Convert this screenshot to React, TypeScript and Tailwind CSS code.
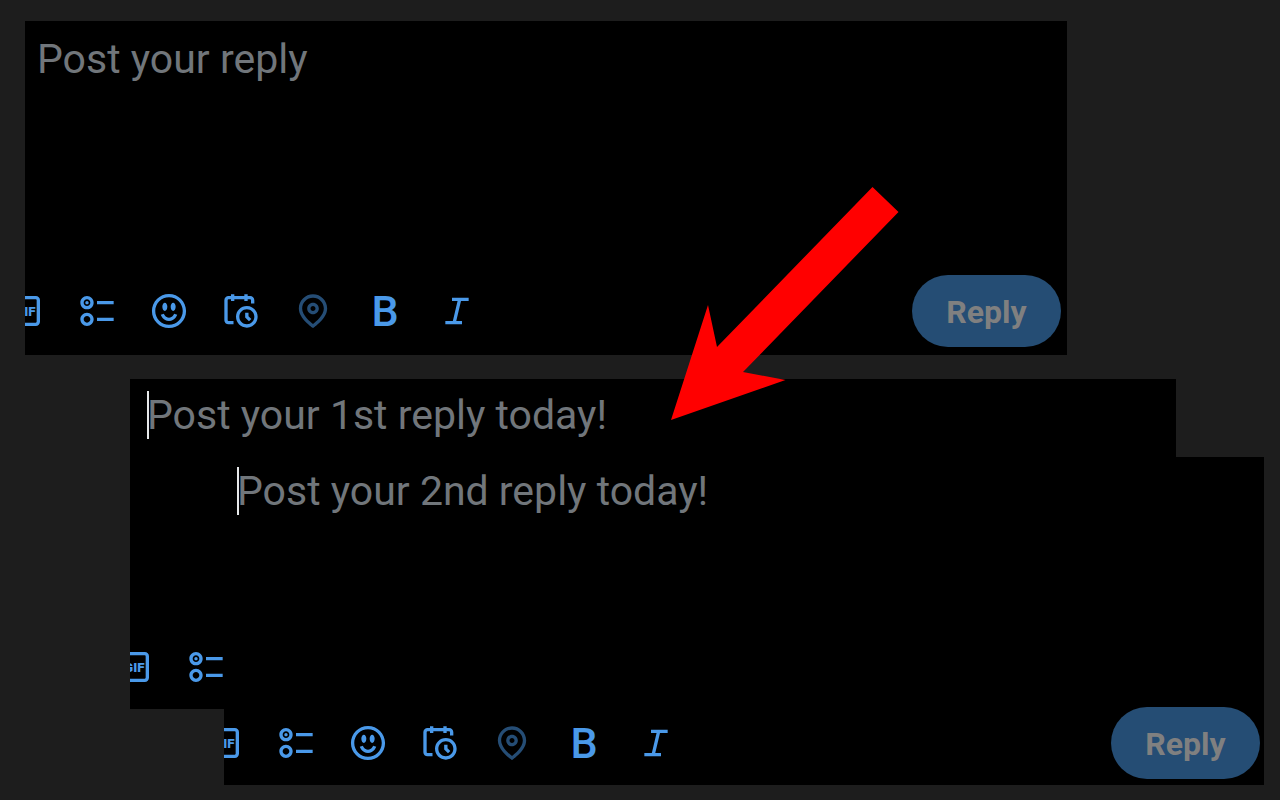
import React from "react";
import clsx from "clsx";

const paths = {
  poll: "M6 5c-1.1 0-2 .895-2 2s.9 2 2 2 2-.895 2-2-.9-2-2-2zM2 7c0-2.209 1.79-4 4-4s4 1.791 4 4-1.79 4-4 4-4-1.791-4-4zm20 1H12V6h10v2zM6 15c-1.1 0-2 .895-2 2s.9 2 2 2 2-.895 2-2-.9-2-2-2zm-4 2c0-2.209 1.79-4 4-4s4 1.791 4 4-1.79 4-4 4-4-1.791-4-4zm20 1H12v-2h10v2zM7 7c0 .552-.45 1-1 1s-1-.448-1-1 .45-1 1-1 1 .448 1 1z",
  emoji:
    "M8 9.5C8 8.119 8.672 7 9.5 7S11 8.119 11 9.5 10.328 12 9.5 12 8 10.881 8 9.5zm6.5 2.5c.828 0 1.5-1.119 1.5-2.5S15.328 7 14.5 7 13 8.119 13 9.5s.672 2.5 1.5 2.5zM12 16c-2.224 0-3.021-2.227-3.051-2.316l-1.897.633c.05.15 1.271 3.684 4.949 3.684s4.898-3.533 4.949-3.684l-1.896-.638c-.033.095-.83 2.322-3.053 2.322zm10.25-4.001c0 5.652-4.598 10.25-10.25 10.25S1.75 17.652 1.75 12 6.348 1.75 12 1.75 22.25 6.348 22.25 12zm-2 0c0-4.549-3.701-8.25-8.25-8.25S3.75 7.451 3.75 12s3.701 8.25 8.25 8.25 8.25-3.701 8.25-8.25z",
  schedule:
    "M6 3V2h2v1h6V2h2v1h1.5C18.88 3 20 4.119 20 5.5v2h-2v-2c0-.276-.22-.5-.5-.5H16v1h-2V5H8v1H6V5H4.5c-.28 0-.5.224-.5.5v12c0 .276.22.5.5.5h3v2h-3C3.12 20 2 18.881 2 17.5v-12C2 4.119 3.12 3 4.5 3H6zm9.5 8c-2.49 0-4.5 2.015-4.5 4.5s2.01 4.5 4.5 4.5 4.5-2.015 4.5-4.5-2.01-4.5-4.5-4.5zM9 15.5C9 11.91 11.91 9 15.5 9s6.5 2.91 6.5 6.5-2.91 6.5-6.5 6.5S9 19.09 9 15.5zm5.5-2.5h2v2.086l1.71 1.707-1.42 1.414-2.29-2.293V13z",
  location:
    "M12 7c-1.93 0-3.5 1.57-3.5 3.5S10.07 14 12 14s3.5-1.57 3.5-3.5S13.93 7 12 7zm0 5c-.827 0-1.5-.673-1.5-1.5S11.173 9 12 9s1.5.673 1.5 1.5S12.827 12 12 12zm0-10c-4.687 0-8.5 3.813-8.5 8.5 0 5.967 7.621 11.116 7.945 11.332l.555.37.555-.37c.324-.216 7.945-5.365 7.945-11.332C20.5 5.813 16.687 2 12 2zm0 17.77c-1.665-1.241-6.5-5.196-6.5-9.27C5.5 6.916 8.416 4 12 4s6.5 2.916 6.5 6.5c0 4.073-4.835 8.028-6.5 9.27z",
};

const Icon = ({ d }: { d: string }) => (
  <svg viewBox="0 0 24 24" className="h-10 w-10" fill="currentColor" aria-hidden="true">
    <path d={d} />
  </svg>
);

const GifIcon = () => (
  <svg viewBox="0 0 24 24" className="h-10 w-10" fill="none" aria-hidden="true">
    <rect x="4" y="4" width="16" height="16" rx="1.5" stroke="currentColor" strokeWidth="2" />
    <text x="18.3" y="14.8" textAnchor="end" fill="currentColor" className="font-[Roboto,sans-serif] text-[8px] font-black">
      GIF
    </text>
  </svg>
);

const ItalicIcon = () => (
  <svg viewBox="0 0 24 24" className="h-10 w-10" fill="none" stroke="currentColor" strokeWidth="2" aria-hidden="true">
    <path d="M9 5h10M5 19h10M13.6 5l-3.3 14" />
  </svg>
);

const tools = [
  { label: "Add a GIF", icon: <GifIcon /> },
  { label: "Add poll", icon: <Icon d={paths.poll} /> },
  { label: "Add emoji", icon: <Icon d={paths.emoji} /> },
  { label: "Schedule post", icon: <Icon d={paths.schedule} /> },
  { label: "Tag location", icon: <Icon d={paths.location} />, disabled: true },
  { label: "Bold", icon: <span className="block w-10 text-center text-[43px] leading-[42px] font-medium">B</span> },
  { label: "Italic", icon: <ItalicIcon /> },
];

interface ComposerProps {
  placeholder: string;
  focused?: boolean;
  className?: string;
  fieldClassName?: string;
  toolbarClassName?: string;
}

const Composer = ({ placeholder, focused, className, fieldClassName, toolbarClassName }: ComposerProps) => {
  return (
    <section className={clsx("overflow-hidden bg-black", className)}>
      <div className={fieldClassName}>
        <div className="relative">
          <textarea
            aria-label={placeholder}
            rows={5}
            placeholder={placeholder}
            className="block w-full resize-none overflow-hidden bg-transparent text-[41px] leading-[48px] text-[#e7e9ea] outline-none placeholder:text-[#71767b]"
          />
          {focused && <span className="absolute top-0 left-0 h-12 w-0.5 bg-[#e7e9ea]" />}
        </div>
      </div>
      <div className={clsx("flex items-center justify-between", toolbarClassName)}>
        <div className="flex h-[72px] text-[#4a99e9]">
          {tools.map((tool) => (
            <button
              key={tool.label}
              type="button"
              aria-label={tool.label}
              disabled={tool.disabled}
              className="h-[72px] px-4 disabled:opacity-50"
            >
              {tool.icon}
            </button>
          ))}
        </div>
        <button
          type="button"
          disabled
          className="h-[72px] min-w-[149px] rounded-full bg-[#254d74] px-8 pt-0.5 text-[32px] font-bold text-[#808080]"
        >
          Reply
        </button>
      </div>
    </section>
  );
};

const App = () => {
  return (
    <main className="relative min-h-screen overflow-hidden bg-[#1d1d1d] pt-[21px] pb-[15px] font-[Roboto,sans-serif]">
      <Composer
        placeholder="Post your reply"
        className="mr-[213px] ml-[25px] pt-[14px] pb-2"
        fieldClassName="px-3"
        toolbarClassName="-ml-9 pr-1.5"
      />
      <Composer
        placeholder="Post your 1st reply today!"
        focused
        className="mt-6 mr-[104px] ml-[130px] pt-3 pb-1.5"
        fieldClassName="pr-4 pl-[17px]"
        toolbarClassName="-ml-8 pr-1.5"
      />
      <Composer
        placeholder="Post your 2nd reply today!"
        focused
        className="relative -mt-[252px] mr-4 ml-[224px] pt-2.5 pb-1.5"
        fieldClassName="pr-3 pl-[13px]"
        toolbarClassName="-ml-9 pr-1"
      />
      <svg
        viewBox="0 0 228 234"
        className="pointer-events-none absolute top-[187px] left-[671px] w-[228px]"
        fill="#ff0000"
        aria-hidden="true"
      >
        <path d="M201.5 0L227.5 25L72 185L114.5 193L0 233L37 118L46 160z" />
      </svg>
    </main>
  );
};

export default App;
